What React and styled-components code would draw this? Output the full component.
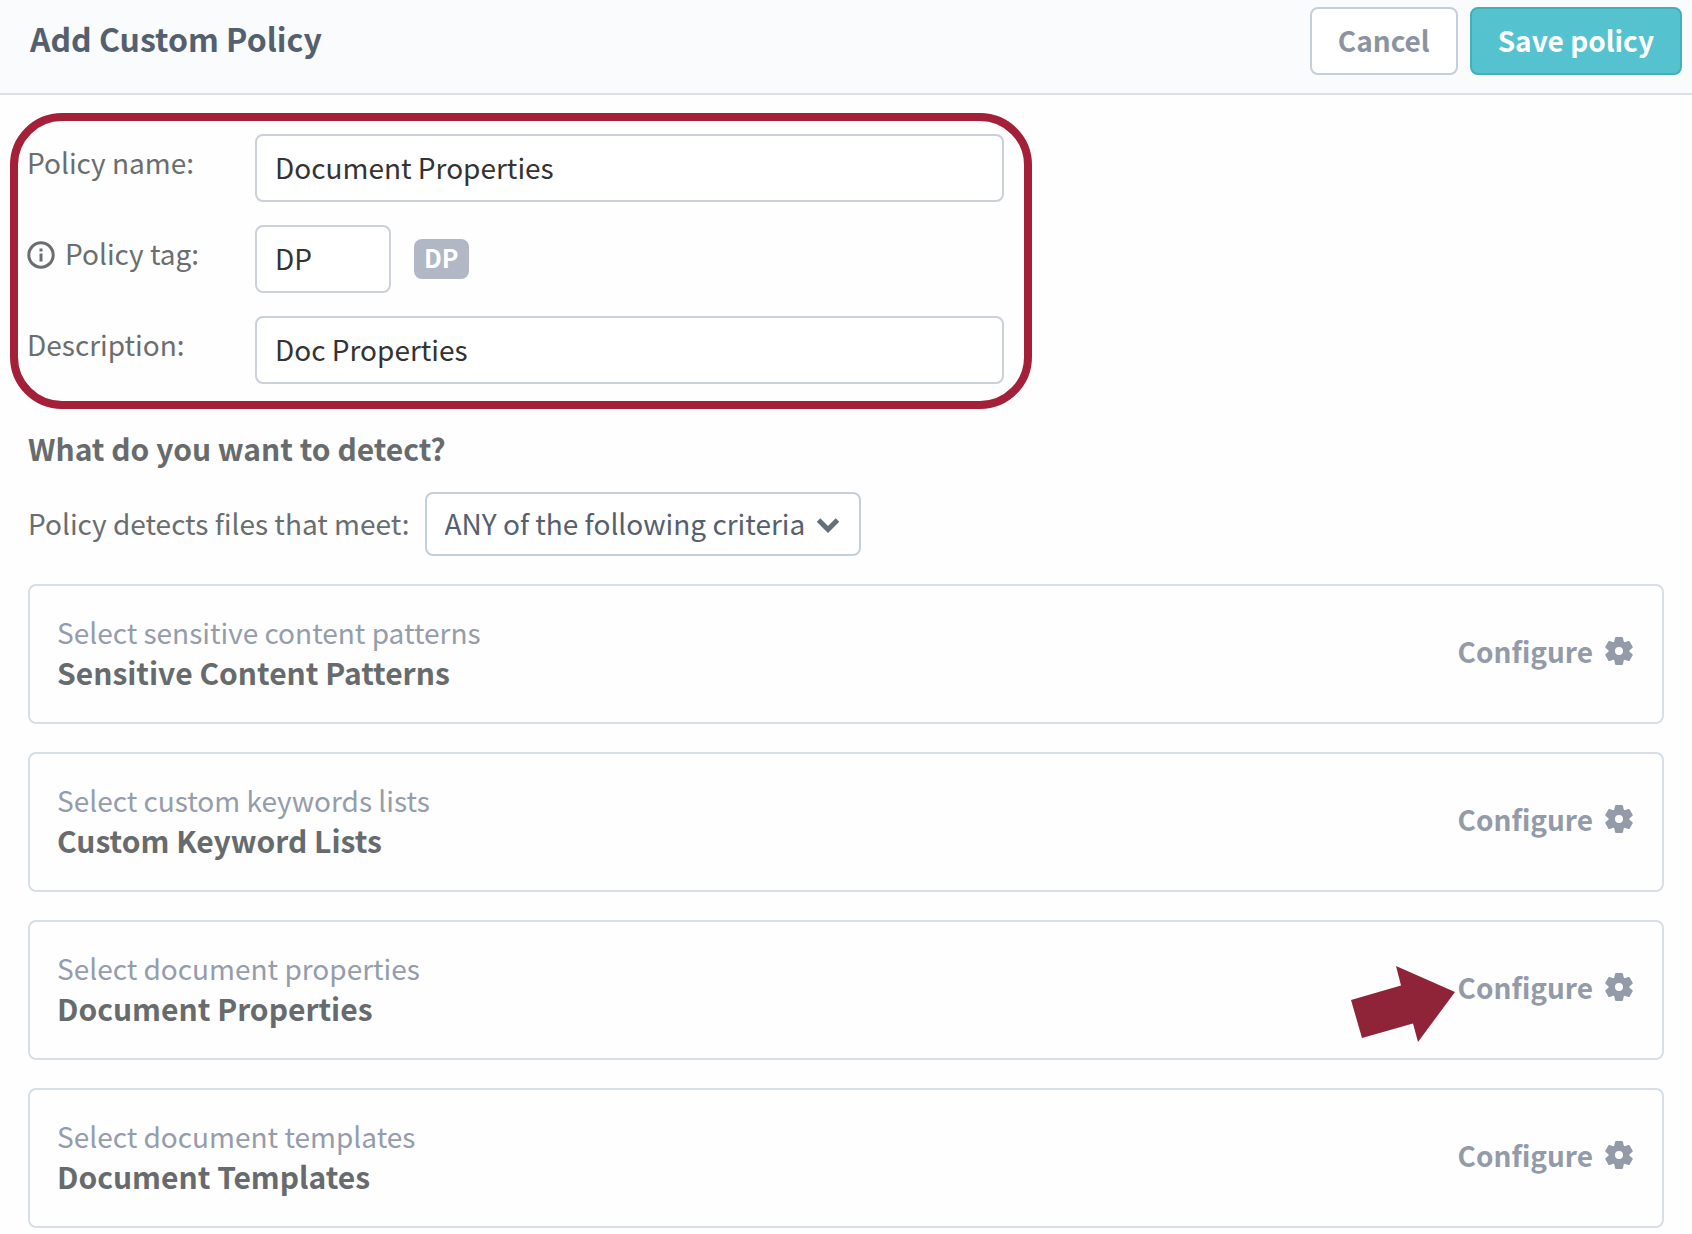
import React, { useState } from 'react'
import styled, { createGlobalStyle } from 'styled-components'

const cards = [
  {
    id: 'patterns',
    hint: 'Select sensitive content patterns',
    title: 'Sensitive Content Patterns',
  },
  {
    id: 'keywords',
    hint: 'Select custom keywords lists',
    title: 'Custom Keyword Lists',
  },
  {
    id: 'properties',
    hint: 'Select document properties',
    title: 'Document Properties',
    pointed: true,
  },
  {
    id: 'templates',
    hint: 'Select document templates',
    title: 'Document Templates',
  },
]

const Info = () => (
  <InfoIcon viewBox='0 0 28 28' aria-hidden='true'>
    <circle cx='14' cy='14' r='12.2' fill='none' stroke='currentColor' strokeWidth='3' />
    <path d='M12.500 7.500h3v3h-3zM12.500 12.500h3v8h-3z' fill='currentColor' />
  </InfoIcon>
)

const Gear = () => (
  <GearIcon viewBox='-14 -14 28 28' aria-hidden='true'>
    <circle r='7.2' fill='none' stroke='currentColor' strokeWidth='6.4' />
    {[0, 60, 120, 180, 240, 300].map((angle) => (
      <path
        key={angle}
        d='M-5 -8L-4 -13Q-3.800 -14 -2.800 -14H2.800Q3.800 -14 4 -13L5 -8Z'
        fill='currentColor'
        transform={`rotate(${angle})`}
      />
    ))}
  </GearIcon>
)

const App = () => {
  const [name, setName] = useState('Document Properties')
  const [tag, setTag] = useState('DP')
  const [description, setDescription] = useState('Doc Properties')

  return (
    <>
      <GlobalStyle />
      <Header>
        <PageTitle>Add Custom Policy</PageTitle>
        <Actions>
          <Button type='button'>Cancel</Button>
          <Button type='button' $primary>
            Save policy
          </Button>
        </Actions>
      </Header>
      <Content>
        <DetailsForm>
          <Label htmlFor='name'>Policy name:</Label>
          <TextInput
            id='name'
            value={name}
            onChange={(e) => setName(e.target.value)}
          />
          <Label htmlFor='tag'>
            <Info />
            Policy tag:
          </Label>
          <TagRow>
            <TextInput
              id='tag'
              $short
              value={tag}
              onChange={(e) => setTag(e.target.value)}
            />
            <Badge>{tag}</Badge>
          </TagRow>
          <Label htmlFor='description'>Description:</Label>
          <TextInput
            id='description'
            value={description}
            onChange={(e) => setDescription(e.target.value)}
          />
        </DetailsForm>
        <SectionTitle>What do you want to detect?</SectionTitle>
        <CriteriaRow>
          <CriteriaLabel htmlFor='criteria'>
            Policy detects files that meet:
          </CriteriaLabel>
          <SelectBox>
            <Select id='criteria' defaultValue='any'>
              <option value='any'>ANY of the following criteria</option>
              <option value='all'>ALL of the following criteria</option>
            </Select>
            <Chevron viewBox='0 0 24 16' aria-hidden='true'>
              <path d='M2.500 3l9.500 9.500L21.500 3' />
            </Chevron>
          </SelectBox>
        </CriteriaRow>
        <CardList>
          {cards.map((card) => (
            <Card key={card.id}>
              <div>
                <CardHint>{card.hint}</CardHint>
                <CardTitle>{card.title}</CardTitle>
              </div>
              <ConfigureBtn type='button'>
                {card.pointed && (
                  <Arrow viewBox='0 0 106 78' aria-hidden='true'>
                    <path d='M1 35L51 20.500L46 1L105 27L68 77L63 58.500L12 73Z' />
                  </Arrow>
                )}
                Configure
                <Gear />
              </ConfigureBtn>
            </Card>
          ))}
        </CardList>
      </Content>
    </>
  )
}

export default App

const GlobalStyle = createGlobalStyle`
  * {
    box-sizing: border-box;
  }
  body {
    margin: 0;
    background: #fefefe;
    color: #6b6e70;
    font-family: 'Noto Sans CJK SC', 'Open Sans', sans-serif;
    font-size: 28px;
    line-height: 40px;
  }
  button,
  input,
  select {
    font: inherit;
  }
`
const Header = styled.header`
  display: flex;
  justify-content: space-between;
  align-items: flex-start;
  padding: 7px 10px 18px 30px;
  background: #fafbfd;
  border-bottom: 2px solid #dcdfe6;
`
const PageTitle = styled.h1`
  margin: 0;
  padding-top: 11px;
  color: #55606e;
  font-size: 32px;
  font-weight: 600;
`
const Actions = styled.div`
  display: flex;
  gap: 12px;
`
const Button = styled.button`
  height: 68px;
  padding: 0 26px 2px;
  border: 2px solid ${(props) => (props.$primary ? '#43afb9' : '#c3d0d9')};
  border-radius: 8px;
  background: ${(props) => (props.$primary ? '#55c3cf' : '#fff')};
  color: ${(props) => (props.$primary ? '#fff' : '#8c93a0')};
  font-weight: 700;
  cursor: pointer;
`
const Content = styled.main`
  padding: 18px 28px 6px;
`
const DetailsForm = styled.form`
  display: grid;
  grid-template-columns: 228px 1fr;
  row-gap: 23px;
  max-width: 1022px;
  margin: 0 -18px;
  padding: 13px 20px 17px 9px;
  border: 8px solid #a32038;
  border-radius: 52px;
`
const Label = styled.label`
  display: flex;
  align-items: center;
  gap: 10px;
  height: 56px;
`
const InfoIcon = styled.svg`
  width: 28px;
  height: 28px;
  margin-top: 4px;
`
const TextInput = styled.input`
  width: ${(props) => (props.$short ? '136px' : '100%')};
  height: 68px;
  padding: 0 18px 3px;
  border: 2px solid #cbd0d9;
  border-radius: 8px;
  background: #fff;
  color: #333;
`
const TagRow = styled.div`
  display: flex;
  align-items: center;
  gap: 23px;
`
const Badge = styled.span`
  padding: 0 10px 4px;
  border-radius: 8px;
  background: #b1b7c4;
  color: #fff;
  font-size: 25px;
  font-weight: 700;
  line-height: 36px;
`
const SectionTitle = styled.h2`
  margin: 19px 0 0;
  color: #676b6d;
  font-size: 30px;
  font-weight: 600;
`
const CriteriaRow = styled.div`
  display: flex;
  align-items: center;
  gap: 15px;
  margin-top: 24px;
`
const CriteriaLabel = styled.label`
  padding-bottom: 2px;
`
const SelectBox = styled.div`
  position: relative;
`
const Select = styled.select`
  display: block;
  height: 64px;
  padding: 0 53px 2px 18px;
  border: 2px solid #c3d0d9;
  border-radius: 8px;
  background: #fff;
  color: #55606e;
  appearance: none;
`
const Chevron = styled.svg`
  position: absolute;
  top: 25px;
  right: 21px;
  width: 24px;
  height: 16px;
  fill: none;
  stroke: #66707d;
  stroke-width: 5;
  pointer-events: none;
`
const CardList = styled.div`
  display: grid;
  gap: 28px;
  margin-top: 28px;
`
const Card = styled.section`
  display: flex;
  justify-content: space-between;
  align-items: center;
  height: 140px;
  padding: 0 29px 4px 27px;
  border: 2px solid #d8dee8;
  border-radius: 8px;
`
const CardHint = styled.div`
  color: #959cab;
`
const CardTitle = styled.h3`
  margin: 0;
  color: #676b6d;
  font-size: 30px;
  font-weight: 600;
`
const ConfigureBtn = styled.button`
  position: relative;
  display: flex;
  align-items: center;
  gap: 12px;
  padding: 0 0 2px;
  border: none;
  background: none;
  color: #939aa8;
  font-weight: 600;
  cursor: pointer;
`
const GearIcon = styled.svg`
  width: 28px;
  height: 28px;
`
const Arrow = styled.svg`
  position: absolute;
  top: -2px;
  right: 100%;
  width: 106px;
  height: 78px;
  margin-right: 2px;
  fill: #8f2438;
`
